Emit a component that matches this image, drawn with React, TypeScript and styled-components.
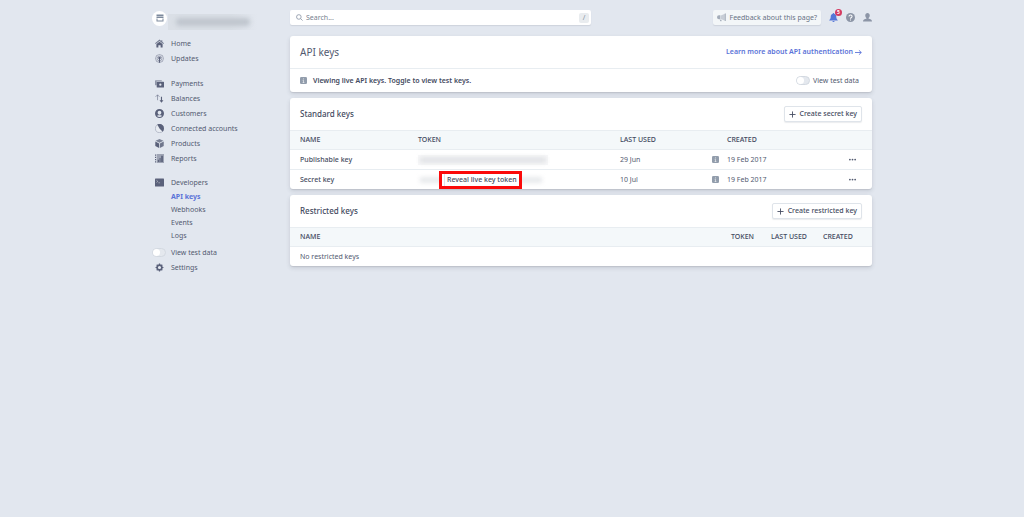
import React from "react";
import styled, { createGlobalStyle, css } from "styled-components";

const c = {
  page: "#e2e7ef",
  text: "#525a70",
  strong: "#434a60",
  icon: "#5a617a",
  link: "#5b73d8",
  line: "#e8edf1",
  head: "#f4f8fa",
};

const GlobalStyle = createGlobalStyle`
  * { box-sizing: border-box; }
  body {
    margin: 0;
    min-height: 100vh;
    background: ${c.page};
    color: ${c.text};
    font: 400 7px/10px "Noto Sans", "Open Sans", sans-serif;
  }
  button, input { font: inherit; color: inherit; margin: 0; }
  button { cursor: pointer; }
  a { color: inherit; text-decoration: none; }
  svg { display: block; flex: none; }
  ul { list-style: none; margin: 0; padding: 0; }
`;

const Shell = styled.div`
  display: flex;
  width: 100%;
  max-width: 720px;
  margin: 0 auto;
`;

const Sidebar = styled.aside`
  flex: 0 0 138px;
  padding-top: 9px;
`;

const Account = styled.button`
  display: flex;
  align-items: center;
  gap: 1px;
  height: 18px;
  padding: 0;
  border: 0;
  background: none;
`;

const Avatar = styled.span`
  display: grid;
  place-items: center;
  width: 15px;
  height: 15px;
  border-radius: 50%;
  background: #fff;
`;

const HiddenName = styled.span`
  display: grid;
  place-items: center;
  width: 90px;
  height: 16px;
  margin-top: 8px;
  overflow: hidden;
  background: linear-gradient(90deg, #dadfe6 70%, ${c.page});
  &::before {
    content: "";
    width: 74px;
    height: 8px;
    border-radius: 4px;
    background: #c0c6ce;
    filter: blur(2px);
  }
`;

const NavGroup = styled.ul<{ $gap: number }>`
  padding-top: ${(p) => p.$gap}px;
`;

const NavLink = styled.a`
  display: flex;
  align-items: center;
  gap: 6px;
  height: 15px;
  padding-left: 2px;
`;

const NavIcon = styled.span`
  display: grid;
  place-items: center;
  width: 11px;
  color: ${c.icon};
`;

const SubLink = styled.a<{ $active?: boolean }>`
  display: flex;
  align-items: center;
  height: 13px;
  padding-left: 19px;
  ${(p) => p.$active && css`color: ${c.link}; font-weight: 700;`}
`;

const SwitchLabel = styled.label<{ $gap: number }>`
  display: flex;
  align-items: center;
  gap: ${(p) => p.$gap}px;
  height: 15px;
  cursor: pointer;
`;

const Switch = styled.input`
  appearance: none;
  display: flex;
  align-items: center;
  width: 14px;
  height: 9px;
  border: 1px solid #d3d9e1;
  border-radius: 5px;
  background: #e4e8ee;
  &::before {
    content: "";
    width: 7px;
    height: 7px;
    border-radius: 50%;
    background: #fff;
  }
  &:checked { justify-content: flex-end; background: ${c.link}; }
`;

const Main = styled.main`
  flex: 1;
  min-width: 0;
  display: flex;
  flex-direction: column;
  gap: 6px;
  padding: 10px 0 20px;
`;

const Topbar = styled.header`
  display: flex;
  align-items: center;
  height: 15px;
  margin-bottom: 5px;
`;

const Search = styled.label`
  display: flex;
  align-items: center;
  gap: 3px;
  flex: 0 1 301px;
  height: 15px;
  padding: 0 2px 0 6px;
  border-radius: 2px;
  background: #fff;
  box-shadow: 0 1px 1px rgba(60, 66, 87, 0.12);
  color: #8590a2;
`;

const SearchInput = styled.input`
  flex: 1;
  min-width: 0;
  padding: 0;
  border: 0;
  outline: 0;
  background: none;
  &::placeholder { color: #77818f; opacity: 1; }
`;

const Slash = styled.kbd`
  width: 10px;
  height: 10px;
  border-radius: 2px;
  background: #e9ecef;
  font: inherit;
  text-align: center;
`;

const Actions = styled.div`
  display: flex;
  align-items: center;
  margin-left: auto;
  gap: 8px;
`;

const Feedback = styled.button`
  display: flex;
  align-items: center;
  gap: 4px;
  height: 15px;
  padding: 0 4px;
  border: 0;
  border-radius: 2px;
  background: #f3f6f8;
  box-shadow: 0 1px 1px rgba(60, 66, 87, 0.12);
  color: #697386;
  white-space: nowrap;
`;

const IconButton = styled.button`
  position: relative;
  padding: 0;
  border: 0;
  background: none;
  color: #8c95a6;
`;

const Badge = styled.span`
  position: absolute;
  top: -4px;
  right: -4px;
  width: 7px;
  height: 7px;
  border-radius: 50%;
  background: #d43a60;
  color: #fff;
  font-size: 5px;
  font-weight: 700;
  line-height: 7px;
  text-align: center;
`;

const Card = styled.section`
  border-radius: 3px;
  background: #fff;
  box-shadow: 0 2px 4px rgba(60, 66, 87, 0.16), 0 1px 1px rgba(0, 0, 0, 0.08);
`;

const CardHeader = styled.div`
  display: flex;
  align-items: center;
  justify-content: space-between;
  height: 33px;
  padding: 0 10px;
  border-bottom: 1px solid ${c.line};
`;

const PageTitle = styled.h1`
  margin: 0;
  font-size: 10px;
  line-height: 16px;
  font-weight: 400;
`;

const CardTitle = styled.h2`
  margin: 0;
  color: ${c.strong};
  font-size: 8px;
  line-height: 12px;
  font-weight: 500;
`;

const DocsLink = styled.a`
  display: flex;
  align-items: center;
  gap: 2px;
  color: ${c.link};
  font-weight: 600;
`;

const Notice = styled.div`
  display: flex;
  align-items: center;
  gap: 6px;
  height: 23px;
  padding: 0 13px 0 10px;
`;

const NoticeText = styled.strong`
  flex: 1;
  color: ${c.strong};
  font-weight: 600;
`;

const Button = styled.button`
  display: flex;
  align-items: center;
  gap: 4px;
  height: 16px;
  padding: 0 4px;
  border: 1px solid #dfe4ea;
  border-radius: 2px;
  background: #fff;
  box-shadow: 0 1px 1px rgba(60, 66, 87, 0.1);
  color: ${c.strong};
  font-weight: 500;
  white-space: nowrap;
`;

const Table = styled.table`
  width: 100%;
  table-layout: fixed;
  border-collapse: separate;
  border-spacing: 0;
  text-align: left;
  tr > :first-child { padding-left: 10px; }
`;

const Th = styled.th<{ $width?: number }>`
  width: ${(p) => (p.$width ? `${p.$width}px` : "auto")};
  height: 19px;
  padding: 0;
  border-bottom: 1px solid ${c.line};
  background: ${c.head};
  color: ${c.strong};
  font-weight: 500;
  text-transform: uppercase;
`;

const Td = styled.td<{ $strong?: boolean }>`
  height: 19px;
  padding: 0;
  tr:not(:last-child) > & { height: 20px; border-bottom: 1px solid ${c.line}; }
  ${(p) => p.$strong && css`color: ${c.strong}; font-weight: 500;`}
`;

const Token = styled.div`
  position: relative;
  display: flex;
  align-items: center;
  height: 18px;
`;

const HiddenToken = styled.span<{ $faint?: boolean }>`
  width: ${(p) => (p.$faint ? 126 : 130)}px;
  height: 10px;
  background: ${(p) => (p.$faint ? "none" : "#f8f8f9")};
  &::before {
    content: "";
    display: block;
    height: 6px;
    margin: 2px;
    background: ${(p) => (p.$faint ? "#e8eaec" : "#e1e3e6")};
    filter: blur(2px);
  }
`;

const Reveal = styled.button`
  position: absolute;
  left: 21px;
  top: 0;
  height: 18px;
  padding: 0 2px 0 5px;
  border: 3px solid #fb0a0a;
  background: linear-gradient(#dfe4ea, #dfe4ea) 2px 0 / 1px 100% no-repeat #fff;
  color: ${c.strong};
  font-weight: 500;
  white-space: nowrap;
`;

const More = styled.button`
  display: block;
  margin-left: auto;
  margin-right: 16px;
  padding: 3px 0;
  border: 0;
  background: none;
`;

const paths: Record<string, React.ReactNode> = {
  home: (
    <>
      <path d="M8 1 0 7.500 1.200 9 8 3.500 14.800 9 16 7.500 13 5V2h-2v1.400z" opacity=".8" />
      <path d="M8 4.800 2.500 9v6H6v-4h4v4h3.500V9z" />
    </>
  ),
  updates: (
    <>
      <circle cx="8" cy="8" r="7" fill="none" stroke="currentColor" strokeWidth="1.3" opacity=".6" />
      <circle cx="8" cy="8" r="4.2" fill="none" stroke="currentColor" strokeWidth="1.3" opacity=".6" />
      <circle cx="8" cy="7" r="2.2" />
      <path d="M7 8h2v7.5H7z" />
    </>
  ),
  payments: (
    <>
      <path d="M1 2h11v2H3v7H1a1 1 0 0 1-1-1V3a1 1 0 0 1 1-1z" opacity=".6" />
      <path fillRule="evenodd" d="M4 5h11a1 1 0 0 1 1 1v8a1 1 0 0 1-1 1H4a1 1 0 0 1-1-1V6a1 1 0 0 1 1-1zm5.500 3a2 2 0 1 0 0 4 2 2 0 0 0 0-4z" />
    </>
  ),
  balances: (
    <>
      <path d="M4.500 11V1.500M1 5l3.500-3.500L8 5" fill="none" stroke="currentColor" strokeWidth="1.6" opacity=".6" />
      <path d="M10.500 5h2v6H15l-3.500 4.500L8 11h2.500z" />
    </>
  ),
  customers: (
    <path fillRule="evenodd" d="M8 0a8 8 0 1 1 0 16A8 8 0 0 1 8 0zm0 3a3.300 3.300 0 0 0-3.300 3.300C4.700 8.500 6 10 8 10s3.300-1.500 3.300-3.700A3.300 3.300 0 0 0 8 3zm-4.500 9.300c2.400 2.600 6.600 2.600 9 0C11 11 9.500 11 8 11s-3 0-4.500 1.300z" />
  ),
  connected: (
    <>
      <circle cx="8" cy="8" r="7.200" fill="#fff" fillOpacity=".5" stroke="currentColor" strokeWidth="1.3" opacity=".45" />
      <path d="M8 8 4 1A8 8 0 0 1 16 8a8 8 0 0 1-2.300 5.700z" />
    </>
  ),
  products: (
    <>
      <path d="M8 0l7 3.300L8 6.600 1 3.300z" opacity=".75" />
      <path d="M.5 4.500 7.300 8v8L.5 12.500z" />
      <path d="M15.500 4.500 8.700 8v8l6.800-3.500z" opacity=".85" />
    </>
  ),
  reports: (
    <>
      <path d="M0 1h2v2H0zm0 4h2v2H0zm0 4h2v2H0zm0 4h2v2H0z" />
      <path d="M3 0h13v16H3z" opacity=".5" />
      <path d="M5 10h2v4H5zm3-3h2v7H8zm3-4h3v11h-3z" />
    </>
  ),
  developers: (
    <>
      <rect y="1" width="16" height="14" rx="1" />
      <path d="m2.500 4 2.500 2-2.500 2M6 8.500h3" fill="none" stroke="#fff" strokeWidth="1" opacity=".7" />
    </>
  ),
  settings: (
    <>
      <circle cx="8" cy="8" r="4.300" fill="none" stroke="currentColor" strokeWidth="3" />
      <path
        d="M8 1v3M8 12v3M1 8h3M12 8h3M3 3l2 2M11 11l2 2M13 3l-2 2M5 11l-2 2"
        fill="none"
        stroke="currentColor"
        strokeWidth="2.200"
      />
    </>
  ),
  store: (
    <path fillRule="evenodd" d="M1 1h14v3H1zM1 5h14v3H1zM1 9h2v4h10V9h2v6H1z" />
  ),
  search: <path d="M6.500 1.500a5 5 0 1 0 0 10.500 5 5 0 0 0 0-10.500zM10.500 10.500 15 15" fill="none" stroke="currentColor" strokeWidth="1.800" />,
  horn: (
    <>
      <path d="M7 4.500 15 1v13l-8-3.500z" opacity=".55" />
      <path d="M3.500 4H6v7H3.500a3.500 3.500 0 0 1 0-7zM5 12h3v2.500H6zM14 1h1.500v13H14z" />
    </>
  ),
  bell: <path d="M8 0a1.300 1.300 0 0 1 1.300 1.500C12 2.200 13 4.500 13 7c0 3 1 4 2.500 5.500v1H.5v-1C2 11 3 10 3 7c0-2.500 1-4.800 3.700-5.500A1.300 1.300 0 0 1 8 0zM6 14h4a2 2 0 0 1-4 0z" />,
  help: (
    <>
      <circle cx="8" cy="8" r="8" />
      <path d="M5.300 6.300C5.300 2.800 11 3 10.800 6.300 10.700 8 8 8 8 10M8 11.500v2" fill="none" stroke="#fff" strokeWidth="1.800" />
    </>
  ),
  user: <path d="M8 0c2.300 0 4 1.700 4 4.300C12 6 11 8 10 8.700v1.500c3 .6 6 1.500 6 4.800H0c0-3.300 3-4.200 6-4.800V8.700C5 8 4 6 4 4.300 4 1.700 5.700 0 8 0z" />,
  info: (
    <>
      <rect width="16" height="16" rx="3" />
      <path d="M8 3v2.500M6 7.500h2V13M6 12.500h4" fill="none" stroke="#fff" strokeWidth="1.600" opacity=".8" />
    </>
  ),
  plus: <path d="M8 1v14M1 8h14" fill="none" stroke="currentColor" strokeWidth="2" />,
  arrow: <path d="M0 8h14M9 3l5.500 5L9 13" fill="none" stroke="currentColor" strokeWidth="2" />,
  more: (
    <>
      <circle cx="2" cy="8" r="2" />
      <circle cx="8" cy="8" r="2" />
      <circle cx="14" cy="8" r="2" />
    </>
  ),
};

function Icon({ name, size = 8, color = "currentColor" }: { name: string; size?: number; color?: string }) {
  return (
    <svg width={size} height={size} viewBox="0 0 16 16" fill="currentColor" color={color} aria-hidden="true">
      {paths[name]}
    </svg>
  );
}

function NavItem({ icon, label }: { icon: string; label: string }) {
  return (
    <li>
      <NavLink href="#">
        <NavIcon><Icon name={icon} size={9} /></NavIcon>
        {label}
      </NavLink>
    </li>
  );
}

const keys = [
  { name: "Publishable key", used: "29 Jun", created: "19 Feb 2017", secret: false },
  { name: "Secret key", used: "10 Jul", created: "19 Feb 2017", secret: true },
];

export default function App() {
  return (
    <>
      <GlobalStyle />
      <Shell>
        <Sidebar>
          <Account aria-label="Account">
            <Avatar><Icon name="store" size={8} color="#7d8a9d" /></Avatar>
            <HiddenName />
          </Account>
          <nav>
            <NavGroup $gap={9}>
              <NavItem icon="home" label="Home" />
              <NavItem icon="updates" label="Updates" />
            </NavGroup>
            <NavGroup $gap={10}>
              <NavItem icon="payments" label="Payments" />
              <NavItem icon="balances" label="Balances" />
              <NavItem icon="customers" label="Customers" />
              <NavItem icon="connected" label="Connected accounts" />
              <NavItem icon="products" label="Products" />
              <NavItem icon="reports" label="Reports" />
            </NavGroup>
            <NavGroup $gap={9}>
              <NavItem icon="developers" label="Developers" />
              <li><SubLink href="#" $active>API keys</SubLink></li>
              <li><SubLink href="#">Webhooks</SubLink></li>
              <li><SubLink href="#">Events</SubLink></li>
              <li><SubLink href="#">Logs</SubLink></li>
            </NavGroup>
            <NavGroup $gap={3}>
              <li>
                <SwitchLabel $gap={5}><Switch type="checkbox" />View test data</SwitchLabel>
              </li>
              <NavItem icon="settings" label="Settings" />
            </NavGroup>
          </nav>
        </Sidebar>
        <Main>
          <Topbar>
            <Search>
              <Icon name="search" size={7} />
              <SearchInput type="text" placeholder="Search..." aria-label="Search" />
              <Slash>/</Slash>
            </Search>
            <Actions>
              <Feedback><Icon name="horn" size={9} color="#a3acb9" />Feedback about this page?</Feedback>
              <IconButton aria-label="Notifications">
                <Icon name="bell" size={9} color="#5577d8" />
                <Badge>5</Badge>
              </IconButton>
              <IconButton aria-label="Help"><Icon name="help" size={9} /></IconButton>
              <IconButton aria-label="Profile"><Icon name="user" size={9} /></IconButton>
            </Actions>
          </Topbar>

          <Card>
            <CardHeader>
              <PageTitle>API keys</PageTitle>
              <DocsLink href="#">Learn more about API authentication <Icon name="arrow" size={7} /></DocsLink>
            </CardHeader>
            <Notice>
              <Icon name="info" size={7} color="#929dac" />
              <NoticeText>Viewing live API keys. Toggle to view test keys.</NoticeText>
              <SwitchLabel $gap={3}><Switch type="checkbox" />View test data</SwitchLabel>
            </Notice>
          </Card>

          <Card>
            <CardHeader>
              <CardTitle>Standard keys</CardTitle>
              <Button><Icon name="plus" size={7} />Create secret key</Button>
            </CardHeader>
            <Table>
              <thead>
                <tr>
                  <Th $width={128}>Name</Th>
                  <Th>Token</Th>
                  <Th $width={92}>Last used</Th>
                  <Th $width={15} aria-label="Details" />
                  <Th $width={100}>Created</Th>
                  <Th $width={45} aria-label="Actions" />
                </tr>
              </thead>
              <tbody>
                {keys.map((k) => (
                  <tr key={k.name}>
                    <Td $strong>{k.name}</Td>
                    <Td>
                      <Token>
                        <HiddenToken $faint={k.secret} />
                        {k.secret && <Reveal>Reveal live key token</Reveal>}
                      </Token>
                    </Td>
                    <Td>{k.used}</Td>
                    <Td><Icon name="info" size={7} color="#929dac" /></Td>
                    <Td>{k.created}</Td>
                    <Td><More aria-label={`Actions for ${k.name}`}><Icon name="more" size={7} /></More></Td>
                  </tr>
                ))}
              </tbody>
            </Table>
          </Card>

          <Card>
            <CardHeader>
              <CardTitle>Restricted keys</CardTitle>
              <Button><Icon name="plus" size={7} />Create restricted key</Button>
            </CardHeader>
            <Table>
              <thead>
                <tr>
                  <Th>Name</Th>
                  <Th $width={40}>Token</Th>
                  <Th $width={52}>Last used</Th>
                  <Th $width={49}>Created</Th>
                </tr>
              </thead>
              <tbody>
                <tr><Td colSpan={4}>No restricted keys</Td></tr>
              </tbody>
            </Table>
          </Card>
        </Main>
      </Shell>
    </>
  );
}
